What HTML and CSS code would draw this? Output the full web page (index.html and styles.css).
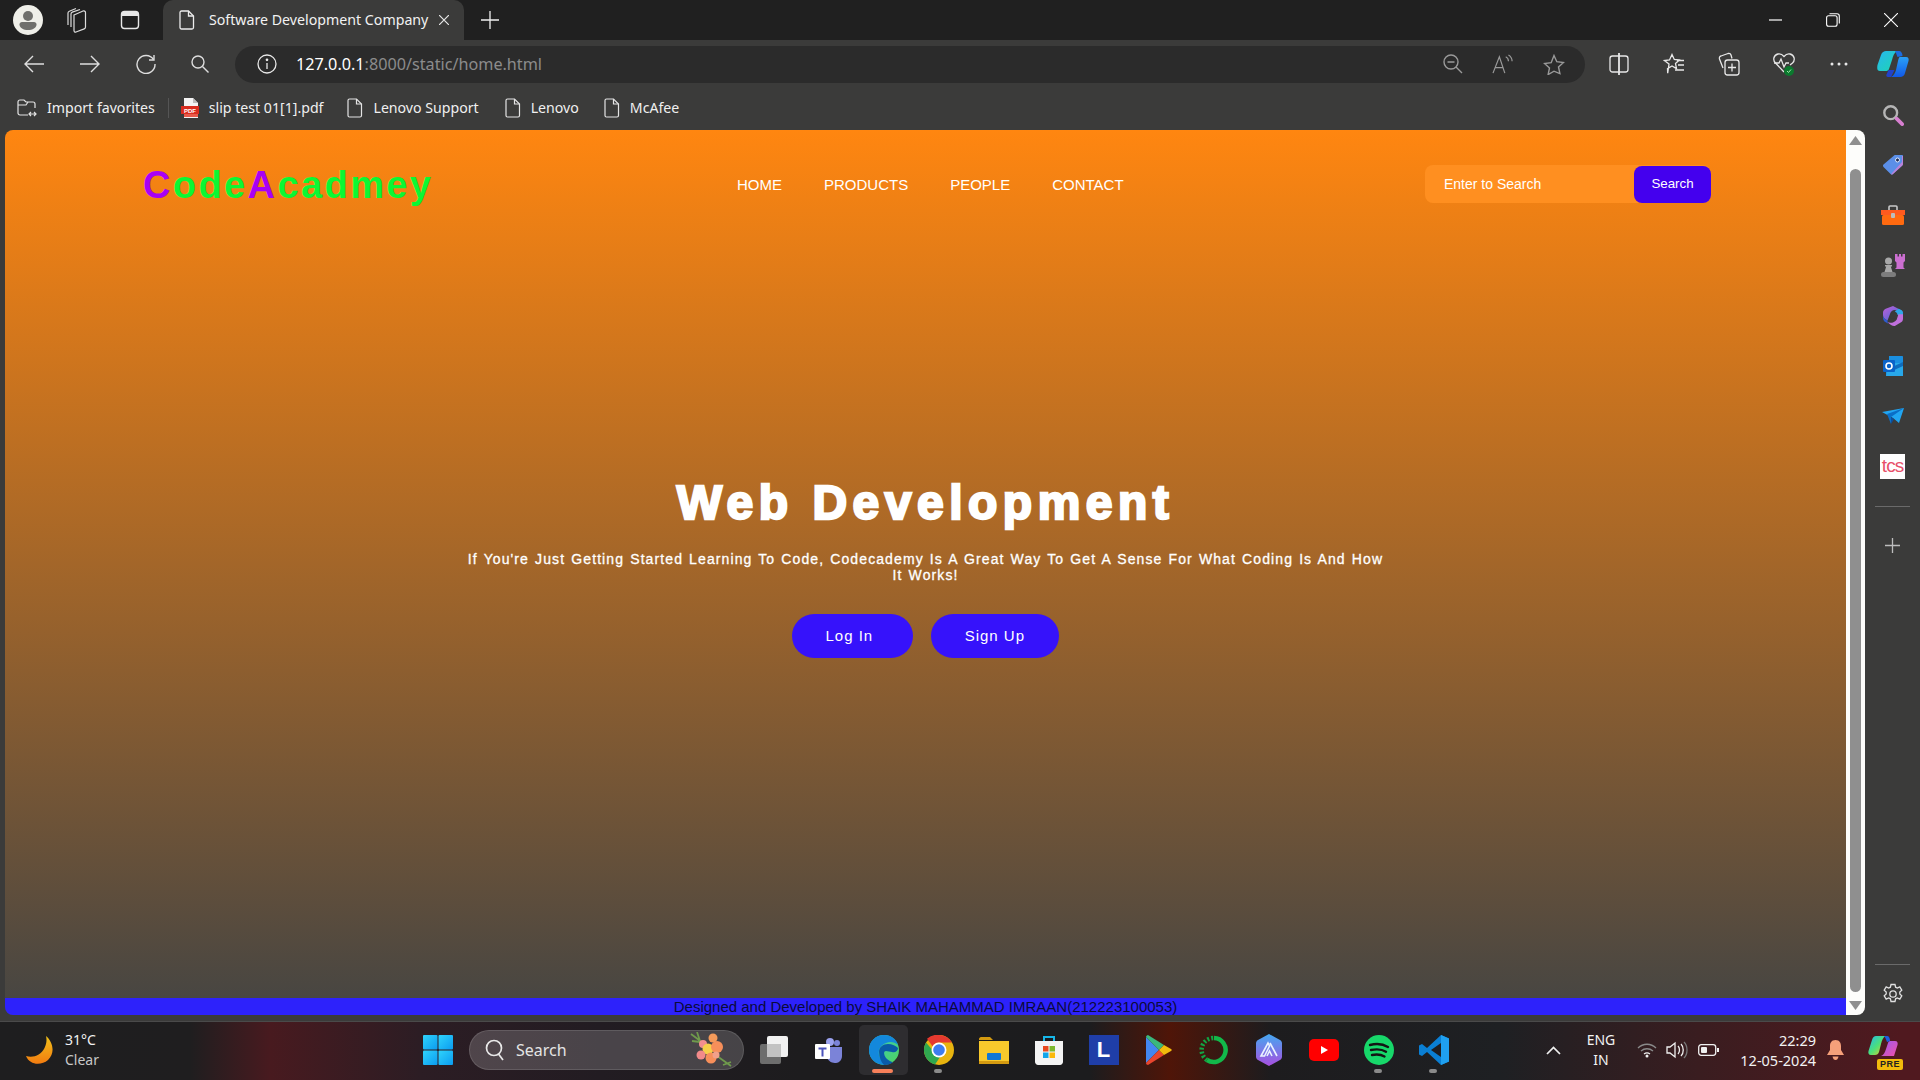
FILE: index.html
```html
<!DOCTYPE html>
<html lang="en">
<head>
<meta charset="utf-8">
<title>Software Development Company</title>
<link rel="stylesheet" href="styles.css">
</head>
<body>
<div class="window">
  <header class="tabstrip">
    <span class="cell avatar-cell"><svg width="30" height="30" viewBox="0 0 30 30"><circle cx="15" cy="15" r="15" fill="#efefe9"/><circle cx="15" cy="11" r="5" fill="#6f6f6c"/><path d="M6.500 19.500c0-1.500 1-2.500 2.500-2.500h12c1.500 0 2.500 1 2.500 2.500 0 3.500-4 5.500-8.500 5.500s-8.500-2-8.500-5.500z" fill="#6f6f6c"/></svg></span>
    <span class="cell w50"><svg width="22" height="26" viewBox="0 0 22 26" fill="none" stroke="#dcdcdc" stroke-width="1.200"><path d="M9 8l9-4c1-.4 2.500.2 2.500 1.500V20c0 1-.5 1.600-1.300 1.900L11 25c-1 .4-2-.2-2-1.500z"/><path d="M6 20V7c0-1 .5-1.600 1.300-1.900L15 2.500"/><path d="M3 18V6c0-1 .5-1.500 1.300-1.800L11 1.500"/></svg></span>
    <span class="cell w56"><svg width="20" height="20" viewBox="0 0 20 20" fill="none" stroke="#e8e8e8" stroke-width="1.400"><rect x="1.500" y="1.500" width="17" height="17" rx="3"/><rect x="2" y="2" width="16" height="4" fill="#e8e8e8" stroke="none"/></svg></span>
    <div class="tab">
      <svg class="tab-doc" width="16" height="20" viewBox="0 0 16 20" fill="none" stroke="#ececec" stroke-width="1.300"><path d="M2.500 1h7l5 5v11.500c0 .8-.7 1.500-1.500 1.500H2.500C1.700 19 1 18.300 1 17.500v-15C1 1.700 1.700 1 2.500 1z"/><path d="M9.500 1v5h5"/></svg>
      <span class="tab-title">Software Development Company</span>
      <svg class="tab-x" width="10" height="10" viewBox="0 0 10 10" stroke="#e8e8e8" stroke-width="1.200"><path d="M0 0l10 10M10 0 0 10"/></svg>
    </div>
    <span class="cell newtab"><svg width="18" height="18" viewBox="0 0 18 18" stroke="#f0f0f0" stroke-width="1.300"><path d="M9 0v18M0 9h18"/></svg></span>
    <div class="winbtns">
      <span class="cell w58"><svg width="13" height="2" viewBox="0 0 13 2"><path d="M0 1h13" stroke="#fff" stroke-width="1.200"/></svg></span>
      <span class="cell w58"><svg width="14" height="14" viewBox="0 0 14 14" fill="none" stroke="#fff" stroke-width="1.100"><rect x=".6" y="2.800" width="10.500" height="10.500" rx="2"/><path d="M3.500.7h7.500c1.400 0 2.300.9 2.300 2.300v7.500"/></svg></span>
      <span class="cell w58"><svg width="14" height="14" viewBox="0 0 14 14" stroke="#fff" stroke-width="1.100"><path d="M0 0l14 14M14 0 0 14"/></svg></span>
    </div>
  </header>

  <nav class="toolbar">
    <span class="cell w56"><svg width="20" height="18" viewBox="0 0 20 18" fill="none" stroke="#dedede" stroke-width="1.400"><path d="M20 9H1M9 1 1 9l8 8"/></svg></span>
    <span class="cell w56"><svg width="20" height="18" viewBox="0 0 20 18" fill="none" stroke="#dedede" stroke-width="1.400"><path d="M0 9h19M11 1l8 8-8 8"/></svg></span>
    <span class="cell w55"><svg width="20" height="20" viewBox="0 0 20 20" fill="none" stroke="#dedede" stroke-width="1.400"><path d="M17.500 5.500A9 9 0 1 0 19 10"/><path d="M18 1v5h-5"/></svg></span>
    <span class="cell w54"><svg width="18" height="18" viewBox="0 0 18 18" fill="none" stroke="#dedede" stroke-width="1.400"><circle cx="7" cy="7" r="6"/><path d="M11.500 11.500 17.500 17.500"/></svg></span>
    <div class="addressbar">
      <svg class="info" width="20" height="20" viewBox="0 0 20 20" fill="none" stroke="#e8e8e8" stroke-width="1.300"><circle cx="10" cy="10" r="9"/><path d="M10 9v6"/><circle cx="10" cy="5.800" r=".7" fill="#e8e8e8"/></svg>
      <span class="url"><b>127.0.0.1</b>:8000/static/home.html</span>
      <div class="addr-icons">
        <svg width="20" height="20" viewBox="0 0 20 20" fill="none" stroke="#9a9a9a" stroke-width="1.400"><circle cx="8" cy="8" r="7"/><path d="M13 13l6 6M4.500 8h7"/></svg>
        <svg width="22" height="20" viewBox="0 0 24 22" fill="none" stroke="#9a9a9a" stroke-width="1.300"><path d="M1 21 8 3l6 18M3.500 15h9"/><path d="M15 3c2 1 3 3 3 5M18 1c2.500 1.500 4 4 4 7"/></svg>
        <svg width="22" height="21" viewBox="0 0 22 21" fill="none" stroke="#9a9a9a" stroke-width="1.400"><path d="M11 1.500l2.800 6.200 6.700.8-5 4.500 1.400 6.600L11 17.200l-5.900 3.400 1.400-6.600-5-4.500 6.700-.8z"/></svg>
      </div>
    </div>
    <div class="tool-icons">
      <span class="cell w55"><svg width="20" height="22" viewBox="0 0 20 22" fill="none" stroke="#e8e8e8" stroke-width="1.300"><rect x="1" y="3" width="18" height="16" rx="2.500"/><path d="M10 0v22" stroke-width="1.800"/></svg></span>
      <span class="cell w55"><svg width="22" height="22" viewBox="0 0 22 22" fill="none" stroke="#e8e8e8" stroke-width="1.300"><path d="M9 1.500l2.300 5 5 .6-3.800 3.500 1 5L9 13l-4.500 2.600.2 4.500L6 11 1.500 7.500l5-.5z"/><path d="M14 7.500h7M15 12h6M12 17h9"/></svg></span>
      <span class="cell w55"><svg width="22" height="24" viewBox="0 0 22 24" fill="none" stroke="#e8e8e8" stroke-width="1.300"><path d="M5 16 1.500 7C1 5.500 1.800 4.300 3 4l7-2.500c1.500-.4 2.600.3 3 1.500l1 3.500"/><rect x="7" y="8" width="14" height="15" rx="2.500"/><path d="M14 11.500v8M10 15.500h8"/></svg></span>
      <span class="cell w55"><svg width="24" height="26" viewBox="0 0 24 26" fill="none"><path d="M12 21 3.500 12C.5 9 1.500 4 6 3c2.500-.5 4.500.7 6 2.500C13.500 3.700 15.500 2.500 18 3c4.500 1 5.500 6 2.500 9L18 14" stroke="#e8e8e8" stroke-width="1.300"/><path d="M2 12h5l2-4 3 8 2-4h3" stroke="#e8e8e8" stroke-width="1.300"/><circle cx="17" cy="20" r="5" fill="#0b7a2e"/><path d="M15 20l1.500 1.500 2.500-3" stroke="#9fe0a8" fill="none"/></svg></span>
      <span class="cell w55"><svg width="18" height="4" viewBox="0 0 18 4" fill="#e8e8e8"><circle cx="2" cy="2" r="1.500"/><circle cx="9" cy="2" r="1.500"/><circle cx="16" cy="2" r="1.500"/></svg></span>
      <span class="cell copilot-cell"><svg width="32" height="28" viewBox="0 0 32 28"><defs><linearGradient id="cp1" x1="0" y1="0" x2="1" y2="1"><stop offset="0" stop-color="#27b7f0"/><stop offset="1" stop-color="#1ed6b0"/></linearGradient><linearGradient id="cp2" x1="0" y1="0" x2="0" y2="1"><stop offset="0" stop-color="#2aa0f5"/><stop offset="1" stop-color="#1259e8"/></linearGradient></defs><path d="M9 1h11c-3 2-4 5-5 9l-3 9c-.5 1.500-2 2-3 2H3C0 21 0 18 .5 15L4 5C5 2 7 1 9 1z" fill="url(#cp1)"/><path d="M14 27h-3c-1.500 0-2-1-1.500-2.500l2-4.500h6z" fill="#2242c9"/><path d="M23 7h6c2.500 0 3 2 2.500 4L28 23c-.5 2.500-2.500 4-5 4H14c3-1.500 4-4 5-7l2-9c.5-2 1-4 2-4z" fill="url(#cp2)"/><path d="M18 1h4c2 0 3.500 2 3.500 5l-5 1c-1-3-2-5-2.500-6z" fill="#1b6be0"/></svg></span>
    </div>
  </nav>

  <div class="body-row">
    <div class="left-col">
      <div class="favbar">
        <span class="fav"><svg width="20" height="18" viewBox="0 0 20 18" fill="none" stroke="#e4e4e4" stroke-width="1.200"><path d="M11 16H3c-1.200 0-2-.8-2-2V3c0-1.200.8-2 2-2h4l2 2h7c1.200 0 2 .8 2 2v4"/><path d="M1 6h8l2-3"/><path d="M12 15h7M14 13l-2 2 2 2M17 13l2 2-2 2"/></svg>Import favorites</span>
        <span class="fav-sep"></span>
        <span class="fav fav-pdf"><svg width="18" height="20" viewBox="0 0 18 20"><path d="M3 0h9l5 5v15H3z" fill="#f4f4f4"/><path d="M12 0l5 5h-5z" fill="#bdbdbd"/><rect x="0" y="8" width="18" height="8" fill="#d92d20"/><rect x="3" y="16" width="14" height="3" fill="#e85a4a"/><text x="9" y="14.500" class="pdf-label" text-anchor="middle">PDF</text></svg>slip test 01[1].pdf</span>
        <span class="fav fav-sup"><svg width="16" height="20" viewBox="0 0 16 20" fill="none" stroke="#e4e4e4" stroke-width="1.200"><path d="M2.500 1h7l5 5v11.500c0 .8-.7 1.500-1.500 1.500H2.500C1.700 19 1 18.300 1 17.500v-15C1 1.700 1.700 1 2.500 1z"/><path d="M9.500 1v5h5"/></svg>Lenovo Support</span>
        <span class="fav fav-len"><svg width="16" height="20" viewBox="0 0 16 20" fill="none" stroke="#e4e4e4" stroke-width="1.200"><path d="M2.500 1h7l5 5v11.500c0 .8-.7 1.500-1.500 1.500H2.500C1.700 19 1 18.300 1 17.500v-15C1 1.700 1.700 1 2.500 1z"/><path d="M9.500 1v5h5"/></svg>Lenovo</span>
        <span class="fav"><svg width="16" height="20" viewBox="0 0 16 20" fill="none" stroke="#e4e4e4" stroke-width="1.200"><path d="M2.500 1h7l5 5v11.500c0 .8-.7 1.500-1.500 1.500H2.500C1.700 19 1 18.300 1 17.500v-15C1 1.700 1.700 1 2.500 1z"/><path d="M9.500 1v5h5"/></svg>McAfee</span>
      </div>

      <div class="viewport">
        <main class="page">
          <div class="site-nav">
            <div class="logo"><i>C</i>ode<i>A</i>cadmey</div>
            <ul class="links">
              <li>HOME</li><li>PRODUCTS</li><li>PEOPLE</li><li>CONTACT</li>
            </ul>
            <form class="search">
              <span class="search-input">Enter to Search</span>
              <span class="search-btn">Search</span>
            </form>
          </div>
          <section class="hero">
            <h1>Web Development</h1>
            <p>If You're Just Getting Started Learning To Code, Codecademy Is A Great Way To Get A Sense For What Coding Is And How It Works!</p>
            <div class="actions">
              <span class="pill pill-login">Log In</span>
              <span class="pill">Sign Up</span>
            </div>
          </section>
          <footer class="site-footer">Designed and Developed by SHAIK MAHAMMAD IMRAAN(212223100053)</footer>
        </main>
        <div class="scrollbar">
          <span class="arrow-up"></span>
          <span class="thumb"></span>
          <span class="arrow-down"></span>
        </div>
      </div>
    </div>

    <aside class="sidebar">
      <span class="side"><svg width="22" height="22" viewBox="0 0 24 24" fill="none"><circle cx="9.500" cy="9.500" r="7" stroke="#b5b5b5" stroke-width="2.600"/><path d="M16 16l6 6" stroke="#d77fd0" stroke-width="4" stroke-linecap="round"/></svg></span>
      <span class="side"><svg width="22" height="22" viewBox="0 0 22 22"><path d="M13 1h7c.6 0 1 .4 1 1v8c0 .5-.2 1-.6 1.400L11 20c-.7.700-1.700.700-2.400 0L1.500 13c-.7-.7-.7-1.700 0-2.400L11.500 2c.5-.6 1-1 1.500-1z" fill="#5b8fe8"/><path d="M21 2v8c0 .5-.2 1-.6 1.400L11 20c-.7.700-1.400.7-2 .3L20 8V2z" fill="#d37fd6" opacity=".8"/><circle cx="15.500" cy="6" r="2" fill="#1d2b55" stroke="#dfe9fb"/></svg></span>
      <span class="side"><svg width="24" height="20" viewBox="0 0 24 20"><path d="M8 5V2c0-.6.400-1 1-1h6c.6 0 1 .4 1 1v3" fill="none" stroke="#c9c9c9" stroke-width="1.600"/><rect x="0" y="5" width="24" height="5" fill="#ff5a1f"/><rect x="1" y="10" width="22" height="10" rx="1.500" fill="#ff6a10"/><rect x="10" y="8" width="4" height="5" rx="1" fill="#bdbdbd"/></svg></span>
      <span class="side"><svg width="24" height="24" viewBox="0 0 24 24"><path d="M14 0h2.500v2.500h1.500V0h2v2.500h1.500V0H24v7l-1.500 1.500v5L24 15H14l1.500-1.500v-5L14 7z" fill="#cb6fd0"/><circle cx="7.500" cy="7" r="3.500" fill="#a8a8a8"/><path d="M4 11h7v1.500H9.800l1.700 5.500H3.500l1.700-5.500H4z" fill="#a8a8a8"/><rect x="0" y="18" width="15" height="5" rx="2.500" fill="#7d7d7d"/></svg></span>
      <span class="side"><svg width="20" height="22" viewBox="0 0 22 24"><defs><linearGradient id="m1" x1="0" y1="0" x2="1" y2="1"><stop offset="0" stop-color="#c060d8"/><stop offset="1" stop-color="#3a66d8"/></linearGradient></defs><path d="M11 1 19 5c2 1 3 2.500 3 4.500L15 6C12 4.500 9 6 8 9l-3 8-2.500-1.500C.8 14.500 0 13 0 11V8.500C0 6.500 1 5 3 4z" fill="url(#m1)"/><path d="M17 4l3 1.500c1.300.8 2 2 2 3.500v4l-6-2c0-2-1-3-3-4z" fill="#2fa8e8"/><path d="M22 10v5c0 2-1 3.500-3 4.500l-6 3.500c-2 .5-5-1-8-4 4 1 8 0 10-3l2-6z" fill="#c070dc"/><path d="M0 11c0 2 .8 3.500 2.500 4.500L5 17c0 2 0 2.500 1 3.500L3 19c-2-1-3-3-3-5z" fill="#2f5bd0"/><circle cx="11" cy="12" r="3.200" fill="#3b3b3a"/></svg></span>
      <span class="side"><svg width="20" height="20" viewBox="0 0 20 20"><path d="M6 0h13c.6 0 1 .4 1 1v18c0 .6-.4 1-1 1H3v-4h3z" fill="#1a8fe0"/><path d="M6 7h14v13H3z" fill="#28a8ea"/><path d="M5 13 20 6v4L9 15z" fill="#0f6cbd"/><rect x="0" y="4" width="12" height="12" rx="1" fill="#0a63c9"/><circle cx="6" cy="10" r="3" fill="none" stroke="#fff" stroke-width="1.600"/></svg></span>
      <span class="side"><svg width="22" height="16" viewBox="0 0 22 16"><path d="M0 4 22 0l-5 15-6-5z" fill="#21a6f2"/><path d="M5 6 22 0 9 9v7z" fill="#0a6ec6"/><path d="M9 16V9l3 2z" fill="#0a4f9e"/></svg></span>
      <span class="side"><span class="tcs">tcs</span></span>
      <span class="side-sep"></span>
      <span class="side side-plus"><svg width="15" height="15" viewBox="0 0 15 15" stroke="#bdbdbd" stroke-width="1.300"><path d="M7.500 0v15M0 7.500h15"/></svg></span>
      <span class="side-sep side-sep-b"></span>
      <span class="side side-gear"><svg width="22" height="22" viewBox="0 0 22 22" fill="none" stroke="#e0e0e0" stroke-width="1.300"><circle cx="11" cy="11" r="3.200"/><path d="M9 1.500h4l.6 2.700 1.700.8 2.500-1.200 2 3.400-2 1.800v2l2 1.800-2 3.400-2.500-1.200-1.700.8-.6 2.700H9l-.6-2.700-1.700-.8-2.500 1.200-2-3.400 2-1.800v-2l-2-1.800 2-3.400 2.500 1.200 1.700-.8z"/></svg></span>
    </aside>
  </div>

  <footer class="taskbar">
    <div class="weather">
      <svg width="28" height="28" viewBox="0 0 28 28"><defs><linearGradient id="moon" x1="0" y1="0" x2="0" y2="1"><stop offset="0" stop-color="#f2c21a"/><stop offset="1" stop-color="#f27b10"/></linearGradient></defs><path d="M20 0c7 6 9.500 17 2 24-7 6-18.500 5-22-4 7 2 15-.5 18.500-8C20.500 8 21 4 20 0z" fill="url(#moon)"/></svg>
      <div class="weather-text"><span>31°C</span><span class="clear">Clear</span></div>
    </div>
    <span class="tb-win"><svg width="30" height="30" viewBox="0 0 30 30"><defs><linearGradient id="win" x1="0" y1="0" x2="1" y2="1"><stop offset="0" stop-color="#2fd3fb"/><stop offset="1" stop-color="#0b9cf0"/></linearGradient></defs><rect x="0" y="0" width="14.500" height="14.500" rx="1" fill="url(#win)"/><rect x="15.500" y="0" width="14.500" height="14.500" rx="1" fill="url(#win)"/><rect x="0" y="15.500" width="14.500" height="14.500" rx="1" fill="url(#win)"/><rect x="15.500" y="15.500" width="14.500" height="14.500" rx="1" fill="url(#win)"/></svg></span>
    <div class="tb-search">
      <svg width="20" height="22" viewBox="0 0 20 22" fill="none" stroke="#e8e8e8" stroke-width="1.700"><circle cx="9" cy="9" r="7.500"/><path d="M13.500 15l4.500 6"/></svg>
      <span>Search</span>
      <svg class="flower" width="44" height="36" viewBox="0 0 44 36"><path d="M2 2l12 9M42 34 28 24M3 9l8 1M8 0l3 9M34 33l8-3" stroke="#6f9a4c" stroke-width="1.800" fill="none"/><circle cx="24" cy="6" r="4.500" fill="#f49a5a"/><circle cx="14" cy="12" r="4" fill="#f28f8f"/><circle cx="19" cy="17" r="5.500" fill="#f6d04a"/><circle cx="28" cy="15" r="6" fill="#f78f5a"/><circle cx="12" cy="23" r="4.500" fill="#f28a8a"/><circle cx="22" cy="26" r="5.500" fill="#f78f5a"/><circle cx="27" cy="23" r="3.500" fill="#f2a08a"/></svg>
    </div>
    <div class="tb-apps">
      <span class="app"><svg width="30" height="30" viewBox="0 0 30 30"><rect x="1" y="9" width="21" height="20" rx="2" fill="#6d6d6d"/><rect x="8" y="1" width="21" height="21" rx="2" fill="#f1f1f1"/><rect x="8" y="9" width="14" height="13" fill="#c2c2c2"/></svg></span>
      <span class="app"><svg width="28" height="28" viewBox="0 0 28 28"><circle cx="22" cy="7" r="3" fill="#7b83d8"/><circle cx="15" cy="6" r="4" fill="#9aa1ee"/><path d="M9 11h18v9c0 4-3 7-6 7s-8-1-9-6z" fill="#7b83d8"/><rect x="0" y="8" width="15" height="15" rx="1" fill="#fff"/><path d="M3.500 11.500h8v2h-3v7h-2v-7h-3z" fill="#4b53bc"/></svg></span>
      <span class="app app-active"><svg width="30" height="30" viewBox="0 0 30 30"><defs><linearGradient id="e1" x1="0" y1="0" x2="1" y2="1"><stop offset="0" stop-color="#36c6c8"/><stop offset="1" stop-color="#50d65a"/></linearGradient></defs><circle cx="15" cy="15" r="15" fill="url(#e1)"/><path d="M0 15C0 6 7 0 15 0c6 0 12 3 14 10-3-3-8-4-12-2-5 2-8 6-7 12 1 4 4 8 7 10C7 30 0 24 0 15z" fill="#1388dc"/><path d="M10 17c0-5 4-8 9-8 4 0 8 2 10 4 0 3-3 5-6 4-2 0-4-1-6-1-3 0-2 4 0 7 2 2 5 4 7 4-3 3-7 3-9 3-3-3-5-8-5-13z" fill="#0a5aa8"/></svg></span>
      <span class="app app-open"><svg width="30" height="30" viewBox="0 0 30 30"><circle cx="15" cy="15" r="15" fill="#e8b40f"/><path d="M15 0a15 15 0 0 1 13 7.500H15a7.500 7.500 0 0 0-6.500 3.800L3 3.800A15 15 0 0 1 15 0z" fill="#e5392f"/><path d="M2 7.500A15 15 0 0 0 11 29.500l6-9a7.500 7.500 0 0 1-9-6z" fill="#2fa84f"/><circle cx="15" cy="15" r="7.500" fill="#fff"/><circle cx="15" cy="15" r="5.800" fill="#3d7df0"/></svg></span>
      <span class="app"><svg width="30" height="28" viewBox="0 0 30 28"><path d="M0 3c0-1 1-2 2-2h9l3 3H0z" fill="#d49a10"/><path d="M0 5h30v22c0 .6-.4 1-1 1H1c-.6 0-1-.4-1-1z" fill="#f8c92c"/><rect x="8" y="17" width="14" height="7" rx="1" fill="#1177d6"/><rect x="0" y="25" width="30" height="3" fill="#d49a10"/></svg></span>
      <span class="app"><svg width="28" height="30" viewBox="0 0 28 30"><path d="M9 6V2h10v4" fill="none" stroke="#16b6e8" stroke-width="2"/><path d="M0 6h28v21c0 1.500-1.500 3-3 3H3c-1.500 0-3-1.500-3-3z" fill="#f4f4f4"/><rect x="8" y="11" width="5.500" height="5.500" fill="#e8491f"/><rect x="14.500" y="11" width="5.500" height="5.500" fill="#7cb82f"/><rect x="8" y="17.500" width="5.500" height="5.500" fill="#12a5ea"/><rect x="14.500" y="17.500" width="5.500" height="5.500" fill="#fbb90b"/></svg></span>
      <span class="app"><span class="lbox">L</span></span>
      <span class="app"><svg width="26" height="30" viewBox="0 0 26 30"><path d="M0 2v26l13-13z" fill="#4386f0"/><path d="M0 2l13 13 5-5L2 0C1 0 0 1 0 2z" fill="#3ab77c"/><path d="M0 28l13-13 5 5L2 30c-1 0-2-1-2-2z" fill="#e8452e"/><path d="M18 10l7 4c1 .5 1 1.500 0 2l-7 4-5-5z" fill="#f2bb0c"/></svg></span>
      <span class="app"><svg width="30" height="30" viewBox="0 0 30 30" fill="none"><path d="M15 3a12 12 0 1 1-7 22" stroke="#12b84a" stroke-width="4.500"/><path d="M8 25A12 12 0 0 1 15 3" stroke="#12a544" stroke-width="4.500" stroke-dasharray="2 2"/></svg></span>
      <span class="app"><svg width="26" height="32" viewBox="0 0 26 32"><defs><linearGradient id="alt" x1="0" y1="0" x2="0" y2="1"><stop offset="0" stop-color="#44a8f0"/><stop offset="1" stop-color="#a84fe0"/></linearGradient></defs><path d="M13 0 24 6c1 .6 2 2 2 3v14c0 1-1 2.400-2 3L13 32 2 26c-1-.6-2-2-2-3V9c0-1 1-2.400 2-3z" fill="url(#alt)"/><path d="M5 22 12 9l1.500 3-5 10zM11 22l2.500-5 2.500 5M14 9l7 13" stroke="#eaf2ff" stroke-width="1.600" fill="none"/></svg></span>
      <span class="app"><svg width="30" height="22" viewBox="0 0 30 22"><rect width="30" height="22" rx="5" fill="#f00"/><path d="M12 7l7 4-7 4z" fill="#fff"/></svg></span>
      <span class="app app-open"><svg width="30" height="30" viewBox="0 0 30 30" fill="none"><circle cx="15" cy="15" r="15" fill="#17d86a"/><path d="M6 10c6-1.500 13-1 18 2M7 15c5-1 11-.8 15 1.700M8 20c4-.8 9-.6 12.500 1.500" stroke="#141414" stroke-width="2.400" stroke-linecap="round"/></svg></span>
      <span class="app app-open"><svg width="30" height="30" viewBox="0 0 30 30"><path d="M22 0l8 3.500v23L22 30 8 17l-5 4-3-1.500v-9L3 9l5 4z" fill="#0a7fd4"/><path d="M22 0l8 3.500v23L22 30z" fill="#1fa0f0"/><path d="M22 8 12 15l10 7z" fill="#1e1e22"/></svg></span>
    </div>
    <div class="tray">
      <span class="tray-chevron"><svg width="15" height="9" viewBox="0 0 15 9" fill="none" stroke="#f0f0f0" stroke-width="1.700"><path d="M1 8l6.500-6.500L14 8"/></svg></span>
      <span class="lang"><span>ENG</span><span>IN</span></span>
      <span class="tray-ico wifi"><svg width="20" height="16" viewBox="0 0 20 16" fill="none" stroke="#8a8a8a" stroke-width="1.300"><path d="M1 6c5-5 13-5 18 0M4 9c3.500-3 8.500-3 12 0"/><path d="M7 12c2-1.500 4-1.500 6 0" stroke="#f0f0f0"/><circle cx="10" cy="14" r="1.500" fill="#f0f0f0" stroke="none"/></svg></span>
      <span class="tray-ico"><svg width="22" height="18" viewBox="0 0 22 18" fill="none" stroke="#f0f0f0" stroke-width="1.300"><path d="M1 6v6h3l5 4V2L4 6z"/><path d="M12 5c2 2 2 6 0 8M15 3c3 3 3 9 0 12"/><path d="M18 1c4 4 4 12 0 16" stroke="#777"/></svg></span>
      <span class="tray-ico batt"><svg width="21" height="12" viewBox="0 0 21 12"><rect x=".7" y=".7" width="17" height="10.600" rx="2.500" fill="none" stroke="#f0f0f0" stroke-width="1.300"/><rect x="3" y="3" width="6" height="6" rx="1" fill="#f0f0f0"/><rect x="19" y="4" width="2" height="4" fill="#f0f0f0"/></svg></span>
      <span class="clock"><span>22:29</span><span>12-05-2024</span></span>
      <span class="tray-ico bell"><svg width="17" height="20" viewBox="0 0 17 20"><path d="M8.500 0C4.500 0 3 3 3 6v4l-3 5h17l-3-5V6c0-3-1.500-6-5.500-6z" fill="#f6a07a"/><path d="M5.500 16.500h6C11 19 10 20 8.500 20S6 19 5.500 16.500z" fill="#f6a07a"/></svg></span>
      <span class="tray-copilot"><svg width="30" height="28" viewBox="0 0 30 28"><defs><linearGradient id="cq" x1="0" y1="0" x2="1" y2="1"><stop offset="0" stop-color="#24b8f0"/><stop offset=".5" stop-color="#4be07a"/><stop offset="1" stop-color="#f8c820"/></linearGradient><linearGradient id="cr" x1="0" y1="0" x2="1" y2="1"><stop offset="0" stop-color="#9a5cf0"/><stop offset="1" stop-color="#f04fa8"/></linearGradient></defs><path d="M8 0h10c-3 1-4 4-5 8l-2 8c-.5 2-2 3-4 3H3c-2.500 0-3-2-2.500-4L4 4C5 1 6 0 8 0z" fill="url(#cq)"/><path d="M22 5h5c2.500 0 3 2 2.500 4L26 20H13c3-1 4-4 5-7l2-6c.3-1 1-2 2-2z" fill="url(#cr)"/><path d="M16 0h3c2 0 3 2 3 5l-3 1c-1-3-2-5-3-6z" fill="#1b5fe0"/></svg><span class="pre">PRE</span></span>
    </div>
  </footer>
</div>
</body>
</html>
```
FILE: styles.css
```css
* { box-sizing: border-box; }
html, body { margin: 0; padding: 0; height: 100%; }
body { background: #3b3b3a; overflow: hidden; font-family: "Noto Sans", "Liberation Sans", sans-serif; }
.window { width: 1920px; height: 1080px; display: flex; flex-direction: column; }
.cell { display: flex; align-items: center; justify-content: center; flex: none; }
.w50 { width: 50px; } .w54 { width: 54px; } .w55 { width: 55px; } .w56 { width: 56px; } .w58 { width: 58px; }

/* Tab strip */
.tabstrip { height: 40px; flex: none; background: #202020; display: flex; align-items: center; padding-left: 13px; }
.avatar-cell { width: 30px; }
.tabstrip .w50 { margin-left: 8px; }
.tabstrip .w56 { margin-left: 1px; }
.tab { height: 40px; align-self: flex-end; width: 301px; margin-left: 5px; background: #3b3b3a; border-radius: 10px 10px 0 0; display: flex; align-items: center; padding-left: 16px; color: #f2f2f2; font-size: 14.200px; }
.tab-title { margin: 0 0 2px 14px; white-space: nowrap; width: 221px; }
.tab-x { margin-left: 9px; }
.newtab { width: 52px; }
.winbtns { margin-left: auto; display: flex; }

/* Toolbar */
.toolbar { height: 50px; flex: none; display: flex; align-items: center; padding: 0 0 2px 6px; }
.addressbar { width: 1350px; height: 37px; margin-left: 8px; background: #2b2b2b; border-radius: 19px; display: flex; align-items: center; padding-left: 22px; }
.url { margin-left: 19px; font-size: 16.200px; color: #8c8c8c; white-space: nowrap; }
.url b { color: #fff; font-weight: 400; }
.addr-icons { margin-left: auto; display: flex; align-items: center; gap: 29px; padding-right: 20px; }
.tool-icons { display: flex; align-items: center; margin-left: 6px; }
.copilot-cell { width: 54px; }

/* Body */
.body-row { flex: 1; display: flex; min-height: 0; }
.left-col { width: 1865px; flex: none; display: flex; flex-direction: column; }
.sidebar { flex: 1; display: flex; flex-direction: column; align-items: center; }

/* Favourites */
.favbar { height: 40px; flex: none; display: flex; align-items: center; padding: 0 0 5px 17px; color: #f0f0f0; font-size: 14.150px; }
.fav { display: inline-flex; align-items: center; gap: 10px; white-space: nowrap; }
.fav-sep { width: 1px; height: 20px; background: #555; margin: 0 12px 0 13px; }
.fav-pdf { margin-right: 24px; }
.fav-sup { margin-right: 26px; }
.fav-len { margin-right: 25px; }
.pdf-label { font: 700 6px "Liberation Sans", sans-serif; fill: #fff; }

/* Viewport */
.viewport { flex: none; height: 885px; margin-left: 5px; display: flex; border-radius: 8px; overflow: hidden; }
.page { width: 1841px; flex: none; display: flex; flex-direction: column; font-family: "Liberation Sans", Arial, sans-serif; background: linear-gradient(180deg, #ff8610 0, #484642 98%); color: #fff; }
.scrollbar { flex: 1; background: #fdfdfb; display: flex; flex-direction: column; align-items: center; padding: 6px 0 5px; }
.arrow-up, .arrow-down { width: 13px; height: 9px; background: #8f8f8f; flex: none; }
.arrow-up { clip-path: polygon(50% 0, 100% 100%, 0 100%); }
.arrow-down { clip-path: polygon(0 0, 100% 0, 50% 100%); }
.thumb { flex: 1; width: 11px; margin: 24px 0 9px; background: #8f8f8f; border-radius: 6px; }

/* Site nav */
.site-nav { height: 108px; flex: none; display: flex; align-items: center; padding-left: 138px; }
.logo { width: 594px; margin-top: 2px; font-size: 38px; font-weight: 700; letter-spacing: 2.400px; color: #0cf733; line-height: 1; white-space: nowrap; }
.logo i { font-style: normal; color: #a800f5; }
.links { list-style: none; margin: 0; padding: 0; display: flex; gap: 42px; font-size: 15px; }
.search { margin-left: auto; margin-right: 135px; display: flex; align-items: center; height: 38px; width: 286px; background: #ff8f20; border-radius: 8px; font-size: 14px; }
.search-input { flex: 1; padding-left: 19px; }
.search-btn { width: 77px; height: 37px; margin-top: 1px; background: #4400ee; border-radius: 8px; display: flex; align-items: center; justify-content: center; font-size: 13.330px; padding-bottom: 2px; }

/* Hero */
.hero { display: flex; flex-direction: column; align-items: center; padding-top: 237px; }
.hero h1 { margin: 0; font-size: 48px; line-height: 56px; font-weight: 700; letter-spacing: 5.500px; -webkit-text-stroke: 2.400px #fff; white-space: nowrap; }
.hero p { margin: 20px 0 0; width: 930px; text-align: center; font-size: 14px; line-height: 16px; font-weight: 400; letter-spacing: 1.100px; word-spacing: 1.100px; -webkit-text-stroke: .3px #fff; }
.actions { display: flex; gap: 18px; margin-top: 31px; }
.pill { height: 44px; display: flex; align-items: center; padding: 0 33.500px 2px; background: #3612fb; border-radius: 22px; font-size: 15px; letter-spacing: 1px; }
.pill-login { padding: 0 40px 2px 33px; }

.site-footer { margin-top: auto; height: 17px; flex: none; background: #2d22fb; color: #0a0a3c; font-size: 15px; line-height: 17px; text-align: center; }

/* Sidebar */
.side { width: 100%; height: 50.200px; flex: none; display: flex; align-items: center; justify-content: center; }
.tcs { width: 25px; height: 25px; background: #fff; color: #e8506a; font: 400 19px/24px "Liberation Sans", sans-serif; letter-spacing: -1px; text-align: center; overflow: hidden; display: block; }
.side-sep { width: 35px; height: 1px; background: #6a6a6a; margin-top: 14px; flex: none; }
.side-plus { margin-top: 14px; }
.side-sep-b { margin-top: auto; }
.side-gear { margin-top: 2px; height: 54px; }

/* Taskbar */
.taskbar { height: 59px; flex: none; display: flex; align-items: center; padding-bottom: 2px; color: #f2f2f2; border-top: 1px solid #4a4a4a;
  background: linear-gradient(90deg, #1e1e1f 0, #1f1e1f 190px, #481a1f 270px, #2c1d24 420px, #221c22 600px, #1d1c1e 800px, #1c1c1e 1090px, #4f1508 1170px, #1d1c1e 1270px, #1e2023 1500px, #3a1d20 1700px, #50191f 1900px); }
.weather { width: 410px; flex: none; display: flex; align-items: center; padding-left: 26px; gap: 11px; font-size: 14px; line-height: 20px; }
.weather-text { display: flex; flex-direction: column; }
.clear { color: #c8c8c8; }
.tb-win { width: 55px; flex: none; display: flex; justify-content: center; }
.tb-search { width: 275px; height: 40px; margin-left: 4px; flex: none; display: flex; align-items: center; padding-left: 15px; gap: 11px; background: rgba(255,255,255,.18); border: 1px solid rgba(255,255,255,.12); border-radius: 20px; font-size: 16px; color: #e4e4e4; }
.flower { margin-left: auto; margin-right: 10px; }
.tb-apps { display: flex; margin-left: 2px; }
.app { width: 55px; height: 50px; flex: none; display: flex; align-items: center; justify-content: center; position: relative; }
.app-active { background: #2e2d30; border-radius: 5px; width: 49px; margin: 0 3px; }
.app-active::after { content: ""; position: absolute; left: 13px; bottom: 2px; width: 21px; height: 4px; border-radius: 2px; background: #f7805a; }
.app-open::after { content: ""; position: absolute; left: 23px; bottom: 2px; width: 8px; height: 4px; border-radius: 2px; background: #8a8a8a; }
.lbox { width: 30px; height: 30px; background: #1f3ea8; color: #fff; font: 700 22px/30px "Liberation Sans", sans-serif; text-align: center; display: block; }
.tray { margin-left: auto; display: flex; align-items: center; padding-right: 17px; font-size: 14px; }
.tray-chevron { width: 30px; display: flex; justify-content: center; }
.lang { width: 50px; margin-left: 8px; display: flex; flex-direction: column; align-items: center; line-height: 20px; }
.tray-ico { width: 30px; display: flex; justify-content: center; }
.wifi { margin-left: 6px; }
.batt { margin-left: 1px; }
.clock { width: 93px; display: flex; flex-direction: column; align-items: flex-end; line-height: 20px; font-size: 14.500px; }
.bell { margin-left: 4px; }
.tray-copilot { width: 40px; margin-left: 13px; display: flex; justify-content: center; position: relative; }
.pre { position: absolute; right: 0; bottom: -6px; background: #f2bb0c; color: #222; font: 700 9px/11px "Liberation Sans", sans-serif; padding: 0 3px; border-radius: 2px; letter-spacing: .5px; }
```
